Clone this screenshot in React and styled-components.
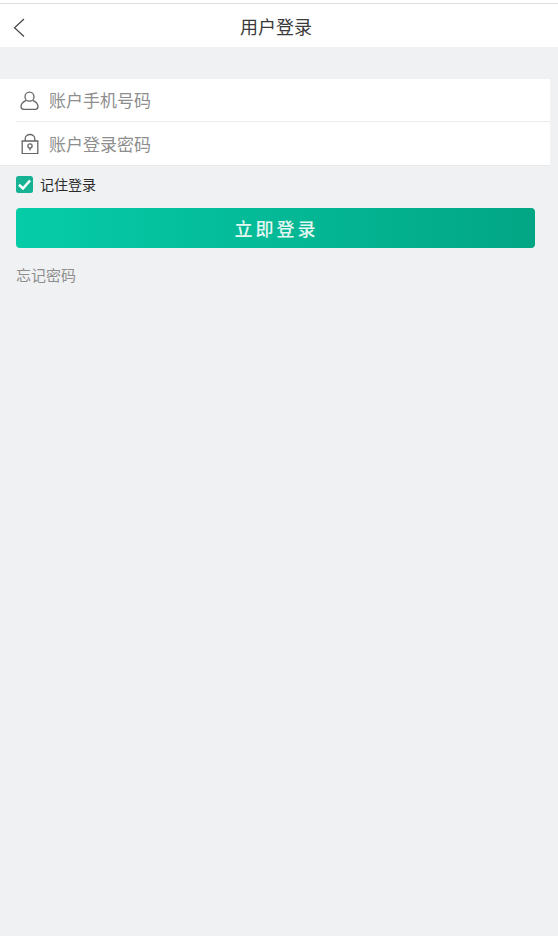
import React from "react";
import styled, { createGlobalStyle } from "styled-components";

const Global = createGlobalStyle`
  html, body { margin: 0; padding: 0; background: #f0f1f3; }
  body { font-family: "Noto Sans CJK SC", "Liberation Sans", sans-serif; }
  * { box-sizing: border-box; }
`;

const Page = styled.div`
  width: 558px;
  height: 936px;
  background: #f0f1f3;
  overflow: hidden;
`;

const StatusGap = styled.div`
  height: 4px;
  background: #fff;
  border-bottom: 1px solid #dedede;
`;

const Header = styled.header`
  height: 43px;
  background: #fff;
  display: flex;
  align-items: center;
  justify-content: center;
  padding-right: 6px;
  position: relative;
`;

const Back = styled.svg`
  position: absolute;
  left: 13px;
  top: 14px;
  width: 14px;
  height: 21px;
`;

const Title = styled.h1`
  margin: 0;
  font-size: 18px;
  font-weight: 400;
  line-height: 24px;
  color: #3a3a3a;
`;

const Form = styled.form`
  margin: 32px 8px 0 0;
  background: #fff;
  padding-left: 16px;
  border-bottom: 1px solid #e8e9eb;
`;

const Row = styled.div`
  height: 43px;
  display: flex;
  align-items: center;
  gap: 10px;
  padding-left: 4px;
  border-bottom: ${(p) => (p.$line ? "1px solid #ebecee" : "none")};
`;

const Icon = styled.svg`
  width: 19px;
  height: 21px;
  flex: none;
  color: #666;
`;

const Field = styled.input`
  flex: 1;
  min-width: 0;
  border: 0;
  outline: 0;
  padding: 0;
  background: transparent;
  font: 400 17px/24px "Noto Sans CJK SC", sans-serif;
  color: #333;
  &::placeholder { color: #8e8e8e; opacity: 1; }
`;

const Remember = styled.label`
  display: flex;
  align-items: center;
  gap: 7px;
  height: 17px;
  margin: 10px 0 0 16px;
  font-size: 14px;
  line-height: 17px;
  color: #2a2a2a;
`;

const Check = styled.svg`
  width: 17px;
  height: 17px;
  flex: none;
`;

const Submit = styled.button`
  display: block;
  width: 519px;
  height: 40px;
  margin: 15px 0 0 16px;
  border: 0;
  border-radius: 4px;
  padding: 0 0 0 2px;
  background: linear-gradient(90deg, #06cca8 0%, #02a685 100%);
  color: #e6f7f2;
  font: 500 18px/40px "Noto Sans CJK SC", sans-serif;
  letter-spacing: 3px;
`;

const Forgot = styled.a`
  display: block;
  margin: 17px 0 0 16px;
  font-size: 15px;
  line-height: 20px;
  color: #8e8e8e;
`;

export default function App() {
  return (
    <Page>
      <Global />
      <StatusGap />
      <Header>
        <Back viewBox="0 0 14 21" fill="none" stroke="#444" strokeWidth="1.2">
          <path d="M11 1 1.500 9.800 11 18.500" />
        </Back>
        <Title>用户登录</Title>
      </Header>
      <Form>
        <Row $line>
          <Icon viewBox="0 0 19 21" fill="none" stroke="currentColor" strokeWidth="1.3">
            <ellipse cx="9.500" cy="6.700" rx="4.500" ry="4.500" />
            <path d="M6.300 10.300C3 11.700 1 14 1 16.600c0 1.800 1 2.700 2.600 2.700h11.800c1.600 0 2.600-.9 2.600-2.700 0-2.600-2-4.900-5.300-6.300" />
          </Icon>
          <Field placeholder="账户手机号码" />
        </Row>
        <Row>
          <Icon viewBox="0 0 19 21" fill="none" stroke="currentColor" strokeWidth="1.3">
            <path d="M5.200 8V5.800a4.800 4.300 0 0 1 9.600 0V8" />
            <path d="M2.200 8h15.600v12.600H2.200z" />
            <circle cx="10" cy="13" r="2.100" />
            <path d="M10 15.100v2.500" />
          </Icon>
          <Field type="text" placeholder="账户登录密码" />
        </Row>
      </Form>
      <Remember>
        <Check viewBox="0 0 17 17">
          <rect width="17" height="17" rx="2.500" fill="#15b293" />
          <path d="M3 8.800 7 12.500l7-8" fill="none" stroke="#fff" strokeWidth="2.600" />
        </Check>
        记住登录
      </Remember>
      <Submit type="button">立即登录</Submit>
      <Forgot>忘记密码</Forgot>
    </Page>
  );
}
